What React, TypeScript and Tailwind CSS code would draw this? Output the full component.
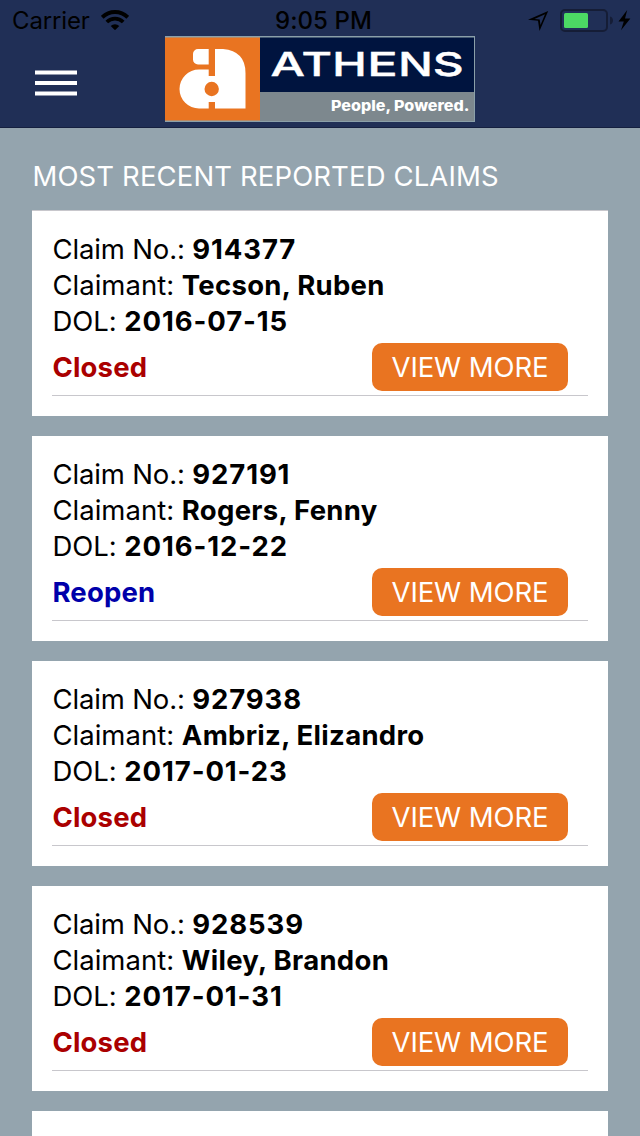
type Claim = { no: string; claimant: string; dol: string; status: 'Closed' | 'Reopen' };

const claims: Claim[] = [
  { no: '914377', claimant: 'Tecson, Ruben', dol: '2016-07-15', status: 'Closed' },
  { no: '927191', claimant: 'Rogers, Fenny', dol: '2016-12-22', status: 'Reopen' },
  { no: '927938', claimant: 'Ambriz, Elizandro', dol: '2017-01-23', status: 'Closed' },
  { no: '928539', claimant: 'Wiley, Brandon', dol: '2017-01-31', status: 'Closed' },
];

function WifiIcon() {
  return (
    <svg className="h-5 w-7" viewBox="0 0 28 20">
      <path d="M1.200 7.300a18.200 18.200 0 0 1 25.600 0" fill="none" stroke="#000" strokeWidth="4" />
      <path d="M5.800 12a11.700 11.700 0 0 1 16.400 0" fill="none" stroke="#000" strokeWidth="3.800" />
      <path d="M9.700 16a6.200 6.200 0 0 1 8.600 0L14 20.200z" />
    </svg>
  );
}

function StatusIcons() {
  return (
    <svg className="h-8 w-28 shrink-0" viewBox="524 4 112 32">
      <path d="M528 19.800 548.200 11l-8.700 20-1.500-10.200zM539.700 19.400l.8 5.600 4.500-10.700-10.500 4.700z" fillRule="evenodd" />
      <rect x="561" y="10" width="46" height="21" rx="4" fill="none" stroke="#151d36" strokeWidth="2" />
      <rect x="564" y="13" width="24" height="15" rx="1.5" fill="#4cd964" />
      <path d="M610 16.500c4 1 4 7 0 8z" fill="#151d36" />
      <path d="M627.200 10 618.500 21.500h5.300l-2.800 8.700 9.400-11.700h-5.400z" />
    </svg>
  );
}

const wordmark = [
  { ch: 'A', x: 105.5, w: 34.5 },
  { ch: 'T', x: 136.5, w: 30.5 },
  { ch: 'H', x: 167.3, w: 34.5 },
  { ch: 'E', x: 202.2, w: 30.5 },
  { ch: 'N', x: 233.3, w: 34.5 },
  { ch: 'S', x: 267.8, w: 31 },
];

function Logo() {
  return (
    <svg className="h-[86px] w-[310px]" viewBox="0 0 310 86">
      <rect width="310" height="86" fill="#8ba0a9" />
      <rect x="0" y="1.500" width="95" height="83" fill="#e97421" />
      <rect x="95" y="1.500" width="214" height="54.500" fill="#00143f" />
      <rect x="95" y="56" width="214" height="29" fill="#7d888e" />
      <path
        d="M33 13h10.700v15.500H33a5 5 0 0 1-5-5V18a5 5 0 0 1 5-5zM50 13h8q22.500 2 22.500 24v35.500H50V66h-6.300v6.500H34A19.500 19.500 0 0 1 34 33.500h9.700V40H50z"
        fill="#fff"
      />
      <circle cx="46.700" cy="53" r="7.200" fill="#e97421" />
      <g fill="#fff" className="font-[Inter,sans-serif] text-[33px] font-medium">
        {wordmark.map(({ ch, x, w }) => (
          <text key={ch} x={x} y="40" textLength={w} lengthAdjust="spacingAndGlyphs" stroke="#fff" strokeWidth="0.4">{ch}</text>
        ))}
      </g>
      <text x="166" y="74.500" textLength="138.500" lengthAdjust="spacingAndGlyphs" fill="#fff" className="font-[Inter,sans-serif] text-[15px] font-extrabold">
        People, Powered.
      </text>
    </svg>
  );
}

function Row({ label, value, labelClass, valueClass }: { label: string; value: string; labelClass: string; valueClass: string }) {
  return (
    <div className="h-9 whitespace-pre pl-[0.5px] leading-9">
      <span className={`font-[370] ${labelClass}`}>{label} </span>
      <span className={`font-bold ${valueClass}`}>{value}</span>
    </div>
  );
}

function ClaimCard({ claim }: { claim: Claim }) {
  return (
    <article className="h-[205px] shrink-0 bg-white px-5 pt-5">
      <Row label="Claim No.:" value={claim.no} labelClass="tracking-[-0.15px]" valueClass="tracking-[0.88px]" />
      <Row label="Claimant:" value={claim.claimant} labelClass="tracking-[0px]" valueClass="tracking-[0.3px]" />
      <Row label="DOL:" value={claim.dol} labelClass="tracking-[-0.05px]" valueClass="tracking-[0.9px]" />
      <div className="mt-1 flex h-[53px] items-start justify-between border-b border-[#c8c7cc] pr-5">
        <span className={claim.status === 'Closed' ? 'pl-[0.5px] font-bold leading-[48px] tracking-[0.15px] text-[#aa0000]' : 'pl-[0.5px] font-bold leading-[48px] tracking-[0.15px] text-[#0000aa]'}>
          {claim.status}
        </span>
        <button className="h-12 w-[196px] rounded-[10px] bg-[#e97421] font-[370] leading-[48px] tracking-[-0.1px] text-white">VIEW MORE</button>
      </div>
    </article>
  );
}

export default function App() {
  return (
    <div className="flex h-[1136px] w-[640px] flex-col overflow-hidden bg-[#94a4ae] font-[Inter,sans-serif] text-[27.5px] text-black">
      <header className="h-32 shrink-0 border-b border-[#15203f] bg-[#202f56]">
        <div className="grid h-9 grid-cols-3 pt-[5px] text-[24px] leading-8">
          <div className="flex gap-[11px] pl-3">
            <span className="tracking-[-0.15px]">Carrier</span>
            <span className="pt-[5px]"><WifiIcon /></span>
          </div>
          <div className="pl-[7px] text-center font-medium tracking-[0.1px]">9:05 PM</div>
          <div className="-mt-px flex justify-end pr-1"><StatusIcons /></div>
        </div>
        <div className="flex">
          <button className="w-[165px] pl-[35px] pt-[7px]" aria-label="Menu">
            <svg className="h-[26px] w-[42px]" viewBox="0 0 42 26">
              <path d="M0 2.500h42M0 13h42M0 23.500h42" stroke="#fff" strokeWidth="3.800" />
            </svg>
          </button>
          <Logo />
        </div>
      </header>
      <main className="flex flex-col px-8">
        <h1 className="h-[82px] pl-[0.5px] pt-[30px] leading-9 tracking-[0.12px] whitespace-nowrap text-white">MOST RECENT REPORTED CLAIMS</h1>
        <div className="h-px shrink-0 bg-[#c8c7cc]" />
        <div className="flex flex-col gap-5">
          {claims.map((c) => <ClaimCard key={c.no} claim={c} />)}
          <div className="h-[205px] shrink-0 bg-white" />
        </div>
      </main>
    </div>
  );
}
